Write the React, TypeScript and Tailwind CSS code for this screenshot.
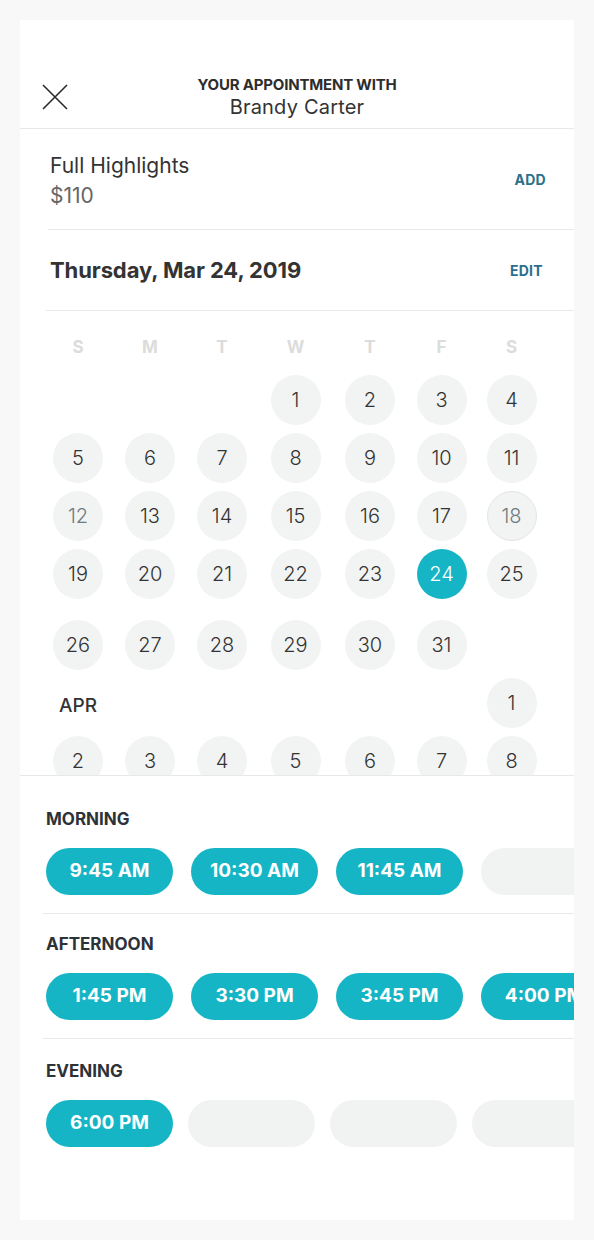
import React from 'react';

type Day = { n?: number; tone?: 'muted' | 'ring' | 'selected' };

const font = { fontFamily: 'Inter, "Open Sans", sans-serif' };

const weekdays = ['S', 'M', 'T', 'W', 'T', 'F', 'S'];

const marchWeeks: Day[][] = [
    [{}, {}, {}, { n: 1 }, { n: 2 }, { n: 3 }, { n: 4 }],
    [{ n: 5 }, { n: 6 }, { n: 7 }, { n: 8 }, { n: 9 }, { n: 10 }, { n: 11 }],
    [{ n: 12, tone: 'muted' }, { n: 13 }, { n: 14 }, { n: 15 }, { n: 16 }, { n: 17 }, { n: 18, tone: 'ring' }],
    [{ n: 19 }, { n: 20 }, { n: 21 }, { n: 22 }, { n: 23 }, { n: 24, tone: 'selected' }, { n: 25 }],
];

const lastWeek: Day[] = [{ n: 26 }, { n: 27 }, { n: 28 }, { n: 29 }, { n: 30 }, { n: 31 }, {}];
const aprilWeek: Day[] = [{ n: 2 }, { n: 3 }, { n: 4 }, { n: 5 }, { n: 6 }, { n: 7 }, { n: 8 }];

const cols = 'grid grid-cols-[72px_72px_72px_75px_74px_69px_71px]';

const slots = [
    { label: 'MORNING', times: ['9:45 AM', '10:30 AM', '11:45 AM', ''], gap: 'gap-[18px]', pt: 'pt-[33px]' },
    { label: 'AFTERNOON', times: ['1:45 PM', '3:30 PM', '3:45 PM', '4:00 PM'], gap: 'gap-[18px]', pt: 'pt-[20px]' },
    { label: 'EVENING', times: ['6:00 PM', '', '', ''], gap: 'gap-[15px]', pt: 'pt-[22px]' },
];

const DayCell: React.FC<{ day: Day }> = ({ day }) => {
    if (!day.n) return <div className="h-[58px]" />;
    const base = 'w-[50px] h-[50px] rounded-full flex items-center justify-center text-[20px] font-light';
    let tone = 'bg-[#f2f3f3] text-[#333]';
    if (day.tone === 'muted') tone = 'bg-[#f2f3f3] text-[#6f7a80]';
    if (day.tone === 'ring') tone = 'bg-[#f2f3f3] text-[#6f7a80] border border-[#e3e5e5]';
    if (day.tone === 'selected') tone = 'bg-[#16b5c5] text-white';
    return (
        <div className="h-[58px] flex items-center justify-center">
            <div className={`${base} ${tone}`}>{day.n}</div>
        </div>
    );
};

const Week: React.FC<{ days: Day[] }> = ({ days }) => (
    <div className={cols}>
        {days.map((d, i) => (
            <DayCell key={i} day={d} />
        ))}
    </div>
);

export default function App() {
    return (
        <div className="min-h-[1240px] bg-[#f8f8f8] p-[20px]" style={font}>
            <div className="bg-white h-[1200px] overflow-hidden">
                {/* header */}
                <div className="h-[109px] border-b border-[#e8e8e8] grid grid-cols-[1fr_auto_1fr] items-end">
                    <div className="pl-[22px] pb-[18px]">
                        <svg width="26" height="26" viewBox="0 0 26 26" fill="none" stroke="#2a2a2a" strokeWidth="1.6">
                            <path d="M1 1L25 25M25 1L1 25" />
                        </svg>
                    </div>
                    <div className="pb-[9px] text-center">
                        <div className="text-[15px] leading-[17px] font-bold text-[#2d2d2d] tracking-[-0.2px]">YOUR APPOINTMENT WITH</div>
                        <div className="text-[20px] leading-[24px] mt-[2px] text-[#333] tracking-[0.2px]">Brandy Carter</div>
                    </div>
                    <div />
                </div>

                {/* service */}
                <div className="ml-[28px] pr-[28px] h-[101px] border-b border-[#e8e8e8] flex items-start justify-between">
                    <div className="pt-[22px] pl-[2px]">
                        <div className="text-[21px] leading-[30px] text-[#333]">Full Highlights</div>
                        <div className="text-[21px] leading-[30px] text-[#666]">$110</div>
                    </div>
                    <div className="pt-[40px] text-[14px] font-bold text-[#2b6f8c] tracking-[0.3px]">ADD</div>
                </div>

                {/* date */}
                <div className="ml-[26px] pr-[31px] h-[81px] border-b border-[#e8e8e8] flex items-center justify-between">
                    <div className="pl-[4px] text-[22px] font-bold text-[#333] tracking-[-0.1px]">Thursday, Mar 24, 2019</div>
                    <div className="text-[14px] font-bold text-[#2b6f8c] tracking-[0.3px]">EDIT</div>
                </div>

                {/* calendar */}
                <div className="h-[465px] border-b border-[#e8e8e8] overflow-hidden">
                    <div className="ml-[22px] w-[505px] pt-[24px]">
                        <div className={`${cols} h-[24px] mb-[12px]`}>
                            {weekdays.map((w, i) => (
                                <div key={i} className="flex items-center justify-center text-[17px] font-bold text-[#dcdcdc]">
                                    {w}
                                </div>
                            ))}
                        </div>
                        {marchWeeks.map((w, i) => (
                            <Week key={i} days={w} />
                        ))}
                        <div className="mt-[13px]">
                            <Week days={lastWeek} />
                        </div>
                        <div className={`${cols} h-[58px]`}>
                            <div className="col-span-6 flex items-center pl-[17px] pt-[6px] text-[19px] font-medium text-[#333]">APR</div>
                            <div className="flex items-center justify-center">
                                <div className="w-[50px] h-[50px] rounded-full bg-[#f2f3f3] flex items-center justify-center text-[20px] font-light text-[#333]">1</div>
                            </div>
                        </div>
                        <Week days={aprilWeek} />
                    </div>
                </div>

                {/* time slots */}
                {slots.map((s, idx) => (
                    <div
                        key={s.label}
                        className={`ml-[23px] ${idx < slots.length - 1 ? 'border-b border-[#e8e8e8] pb-[18px]' : ''} ${s.pt}`}
                    >
                        <div className="pl-[3px] text-[17px] leading-[20px] font-bold text-[#2d3238]">{s.label}</div>
                        <div className={`mt-[19px] pl-[3px] flex ${s.gap} overflow-hidden`}>
                            {s.times.map((t, i) =>
                                t ? (
                                    <div
                                        key={i}
                                        className="shrink-0 w-[127px] h-[47px] rounded-full bg-[#16b5c5] text-white text-[19px] font-bold flex items-center justify-center whitespace-nowrap"
                                    >
                                        {t}
                                    </div>
                                ) : (
                                    <div key={i} className="shrink-0 w-[127px] h-[47px] rounded-full bg-[#f1f3f3]" />
                                )
                            )}
                        </div>
                    </div>
                ))}
            </div>
        </div>
    );
}
